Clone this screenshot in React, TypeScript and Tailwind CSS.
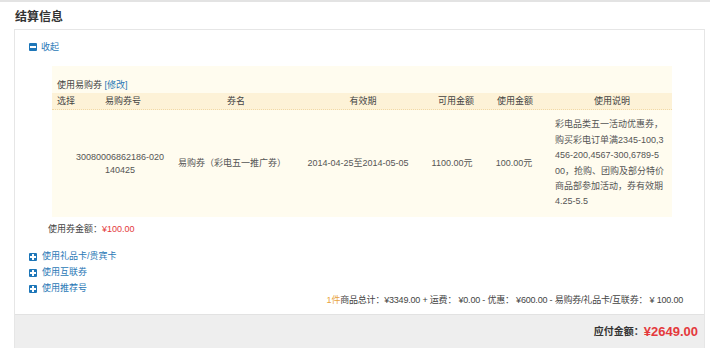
import React from 'react'

const FONT = "font-['Liberation_Sans','Noto_Sans_CJK_SC',sans-serif]"

function ToggleIcon({ open }: { open: boolean }) {
  return (
    <span className="relative inline-block h-[8px] w-[8px] shrink-0 rounded-[1px] bg-[#1d76b8]">
      <span className="absolute left-[1px] top-[3px] h-[2px] w-[6px] bg-white" />
      {!open && <span className="absolute left-[3px] top-[1px] h-[6px] w-[2px] bg-white" />}
    </span>
  )
}

const COLS = ['w-[22px]', 'w-[88px]', 'w-[136px]', 'w-[120px]', 'w-[68px]', 'w-[56px]', 'w-[130px]']

const DESC = [
  '彩电品类五一活动优惠券，',
  '购买彩电订单满2345-100,3',
  '456-200,4567-300,6789-5',
  '00，抢购、团购及部分特价',
  '商品部参加活动，券有效期',
  '4.25-5.5',
]

export default function App() {
  return (
    <div className={`${FONT} h-[348px] w-[710px] overflow-hidden border-t-2 border-[#e3e3e3] bg-white text-[9px] text-[#555]`}>
      {/* Title */}
      <h2 className="ml-[15px] mt-[8px] h-[15px] text-[12px] font-bold leading-[15px] text-[#333]">结算信息</h2>

      {/* Card */}
      <div className="ml-[14px] mt-[4px] w-[691px] border border-b-0 border-[#e6e6e6]">
        <div className="mt-[11px] flex h-[12px] items-center gap-[4px] pl-[14px] leading-[12px] text-[#2a78b6]">
          <ToggleIcon open />
          <span>收起</span>
        </div>

        {/* Coupon box */}
        <div className="ml-[37px] mt-[13px] w-[620px] bg-[#fffcef] pt-[13px]">
          <div className="h-[12px] pl-[5px] leading-[12px] text-[#444]">
            使用易购券 <span className="text-[#2a78b6]">[修改]</span>
          </div>
          <div className="mt-[2px] flex h-[17px] items-center border-b border-dotted border-[#f1d9a6] bg-[#fdf2d7] leading-[16px] text-[#444]">
            <div className={`${COLS[0]} whitespace-nowrap pl-[5px]`}>选择</div>
            <div className={`${COLS[1]} pl-[10px] text-center`}>易购券号</div>
            <div className={`${COLS[2]} pl-[12px] text-center`}>券名</div>
            <div className={`${COLS[3]} pl-[10px] text-center`}>有效期</div>
            <div className={`${COLS[4]} pl-[8px] text-center`}>可用金额</div>
            <div className={`${COLS[5]} pl-[2px] text-center`}>使用金额</div>
            <div className={`${COLS[6]} pl-[10px] text-center`}>使用说明</div>
          </div>
          <div className="flex h-[107px] items-center text-[#555]">
            <div className={COLS[0]} />
            <div className={`${COLS[1]} flex flex-col items-center pl-[4px] leading-[13px]`}>
              <span className="whitespace-nowrap">30080006862186-020</span>
              <span>140425</span>
            </div>
            <div className={`${COLS[2]} whitespace-nowrap pl-[16px]`}>易购券（彩电五一推广券）</div>
            <div className={`${COLS[3]} whitespace-nowrap text-center`}>2014-04-25至2014-05-05</div>
            <div className={`${COLS[4]} text-center`}>1100.00元</div>
            <div className={`${COLS[5]} text-center`}>100.00元</div>
            <div className={`${COLS[6]} pl-[13px] leading-[15.4px]`}>
              {DESC.map((line) => (
                <div key={line} className="whitespace-nowrap">{line}</div>
              ))}
            </div>
          </div>
        </div>

        <div className="ml-[33px] mt-[6px] h-[12px] leading-[12px] text-[#444]">
          使用券金额：<span className="text-[#e4393c]">¥100.00</span>
        </div>

        <div className="mt-[14px] pl-[14px]">
          {['使用礼品卡/贵宾卡', '使用互联券', '使用推荐号'].map((t) => (
            <div key={t} className="flex h-[16px] items-center gap-[5px] text-[#2a78b6]">
              <ToggleIcon open={false} />
              <span>{t}</span>
            </div>
          ))}
        </div>

        <div className="mt-[-3px] flex h-[12px] justify-end pr-[21px] leading-[12px] tracking-[-0.2px] text-[#444]">
          <span className="text-[#e8a33c]">1件</span>
          商品总计：¥3349.00 + 运费： ¥0.00 - 优惠： ¥600.00 - 易购券/礼品卡/互联券： ¥ 100.00
        </div>

        {/* Payable */}
        <div className="mt-[8px] flex h-[40px] items-start justify-end border-t border-[#e2e2e2] bg-[#eeeeee] pr-[6px] pt-[9px]">
          <span className="text-[10px] font-bold leading-[16px] text-[#333]">应付金额：</span>
          <span className="text-[13px] font-bold leading-[16px] text-[#e4393c]">¥2649.00</span>
        </div>
      </div>
    </div>
  )
}
